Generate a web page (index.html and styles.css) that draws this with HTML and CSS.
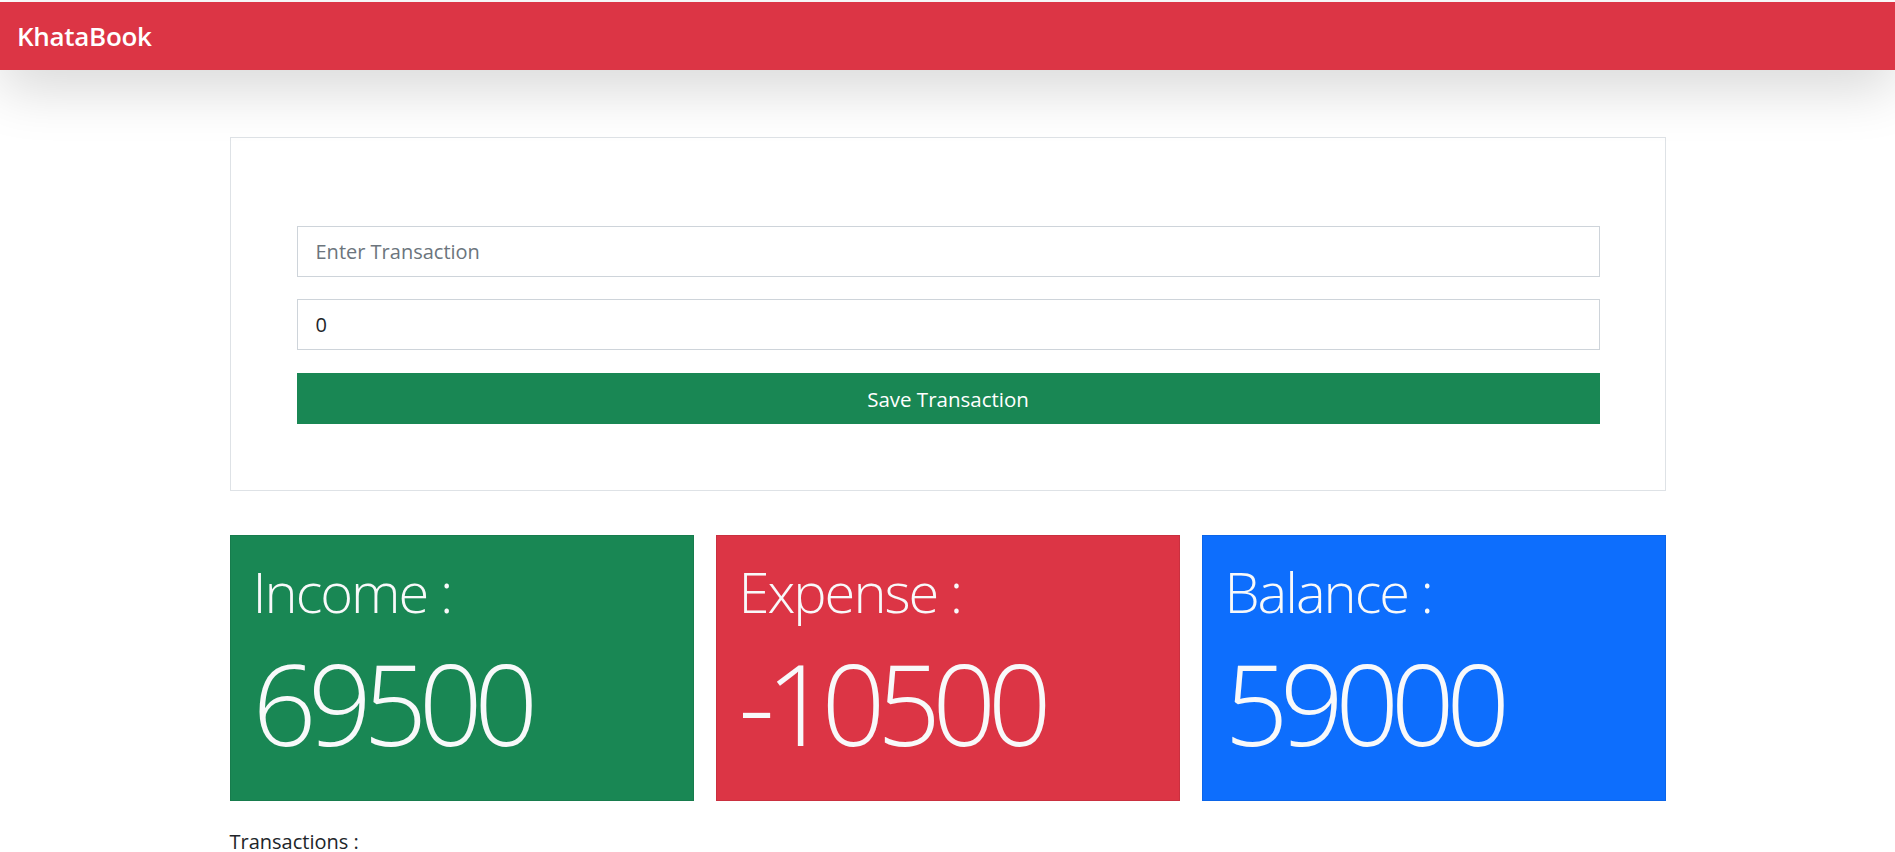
FILE: index.html
```html
<!DOCTYPE html>
<html lang="en">
<head>
<meta charset="utf-8">
<title>KhataBook</title>
<link rel="stylesheet" href="styles.css">
</head>
<body>
<nav class="navbar">
  <span class="brand">KhataBook</span>
</nav>
<main class="container">
  <section class="form-card">
    <input class="field" type="text" placeholder="Enter Transaction">
    <input class="field" type="number" value="0">
    <button class="save-btn" type="button">Save Transaction</button>
  </section>
  <section class="stats">
    <div class="stat stat-income">
      <div class="stat-label">Income :</div>
      <div class="stat-value">69500</div>
    </div>
    <div class="stat stat-expense">
      <div class="stat-label">Expense :</div>
      <div class="stat-value">-10500</div>
    </div>
    <div class="stat stat-balance">
      <div class="stat-label">Balance :</div>
      <div class="stat-value">59000</div>
    </div>
  </section>
  <p class="tx-title">Transactions :</p>
</main>
</body>
</html>
```
FILE: styles.css
```css
* { box-sizing: border-box; }
html, body { margin: 0; }
body {
  padding-top: 2px;
  background: #ffffff;
  font-family: "Open Sans", "Noto Sans", sans-serif;
  color: #212529;
  overflow: hidden;
}
.navbar {
  height: 68px;
  background: #dc3545;
  display: flex;
  align-items: center;
  padding-left: 17px;
  box-shadow: 0 18px 56px rgba(0, 0, 0, 0.16);
  position: relative;
  z-index: 2;
}
.brand {
  color: #ffffff;
  font-size: 26px;
  font-weight: 600;
  letter-spacing: -0.3px;
}
.container {
  width: 1436px;
  margin: 67px auto 0;
}
.form-card {
  border: 1px solid #dee2e6;
  background: #fff;
  padding: 88px 65px 66px 66px;
  display: flex;
  flex-direction: column;
}
.field {
  height: 51px;
  border: 1px solid #ced4da;
  border-radius: 0;
  padding: 0 18px;
  font-family: inherit;
  font-size: 20px;
  color: #212529;
  margin: 0 0 22px;
  outline: none;
  -moz-appearance: textfield;
}
.field::placeholder { color: #6c757d; }
.field::-webkit-outer-spin-button,
.field::-webkit-inner-spin-button { -webkit-appearance: none; margin: 0; }
.field + .field { margin-bottom: 23px; }
.save-btn {
  height: 51px;
  border: 0;
  border-radius: 0;
  background: #198754;
  color: #ffffff;
  font-family: inherit;
  font-size: 20.5px;
}
.stats {
  margin-top: 44px;
  display: grid;
  grid-template-columns: repeat(3, 1fr);
  gap: 22px;
}
.stat {
  height: 266px;
  padding: 22px 22px 0;
  color: #f8f9fa;
  border: 1px solid rgba(0, 0, 0, 0.08);
}
.stat-income { background: #198754; }
.stat-expense { background: #dc3545; }
.stat-balance { background: #0d6efd; }
.stat-label {
  font-size: 56px;
  font-weight: 300;
  line-height: 1.2;
  letter-spacing: -2px;
}
.stat-value {
  margin-top: 11px;
  font-size: 112px;
  font-weight: 300;
  line-height: 1.2;
  letter-spacing: -8.5px;
}
.tx-title {
  margin: 26px 0 0;
  font-size: 20px;
  line-height: 1.5;
}
```
